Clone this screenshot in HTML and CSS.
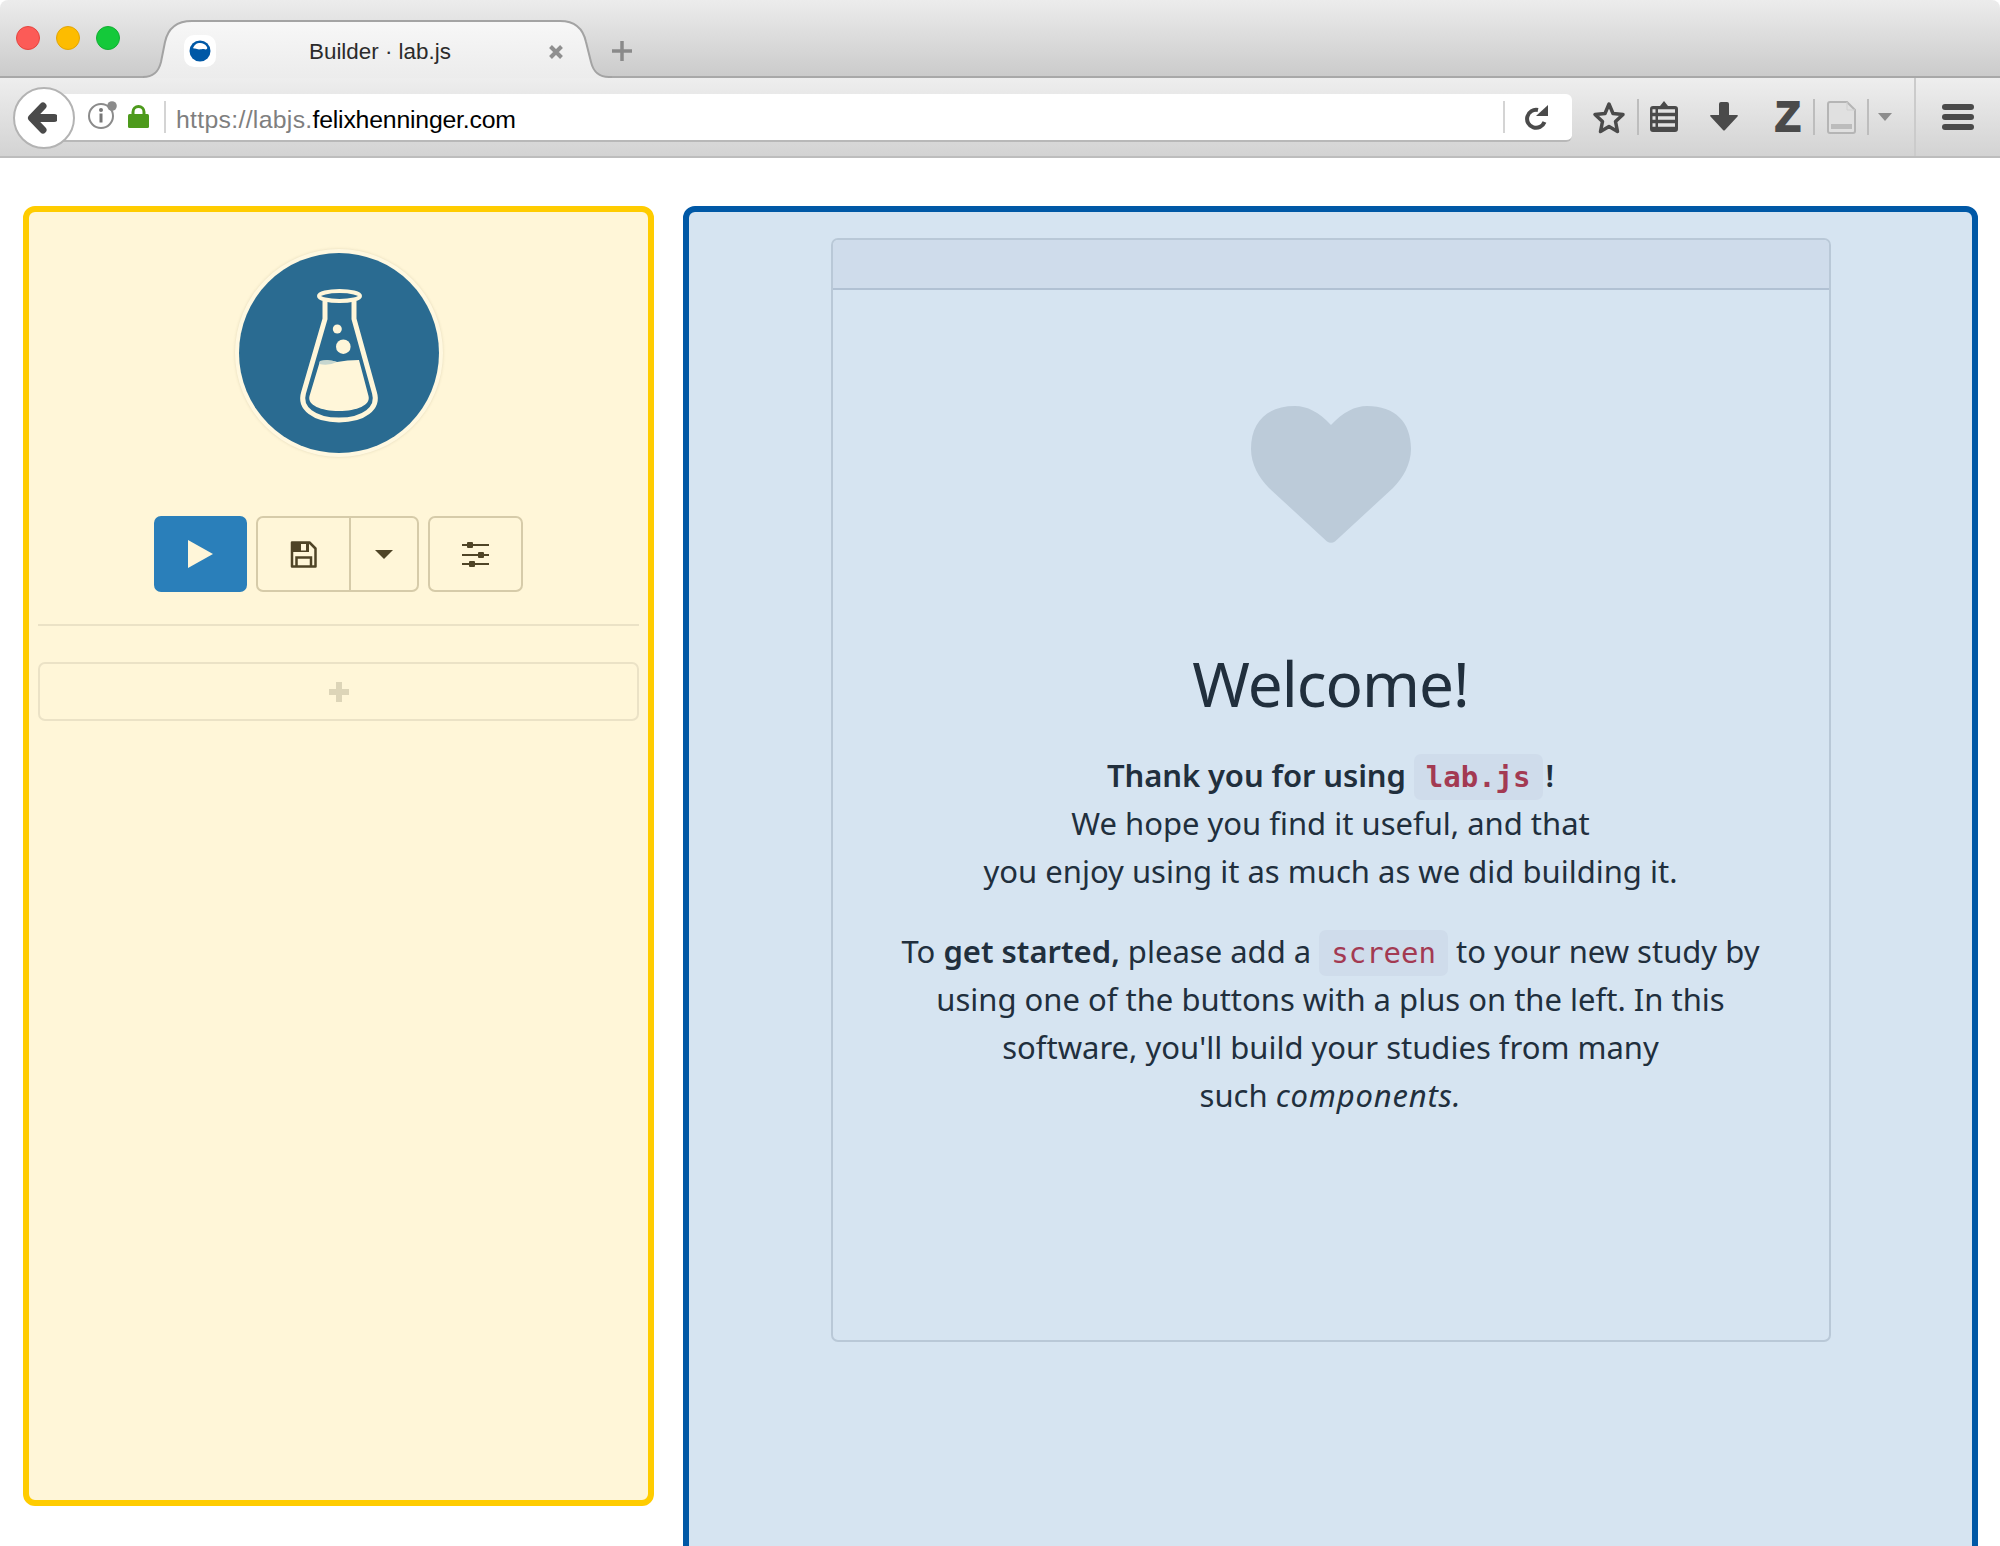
FILE: index.html
```html
<!DOCTYPE html>
<html lang="en">
<head>
<meta charset="utf-8">
<title>Builder · lab.js</title>
<link rel="stylesheet" href="styles.css">
</head>
<body>
<header class="browser">
  <div class="tabstrip">
    <div class="lights">
      <span class="light light-red"></span>
      <span class="light light-yellow"></span>
      <span class="light light-green"></span>
    </div>
    <div class="tab">
      <svg class="tab-shape" width="469" height="58" viewBox="0 0 469 58">
        <defs><linearGradient id="tabfill" x1="0" y1="0" x2="0" y2="1"><stop offset="0" stop-color="#f7f7f7"/><stop offset="1" stop-color="#ececec"/></linearGradient></defs>
        <path fill="url(#tabfill)" d="M0 58V57C12 57 16 50 18 42L22 22C25 8 34 1 49 1H417C432 1 440 8 443 22L448 42C450 50 454 57 466 57H469V58Z"/>
        <path fill="none" stroke="#a3a3a3" stroke-width="2" d="M0 57C12 57 16 50 18 42L22 22C25 8 34 1 49 1H417C432 1 440 8 443 22L448 42C450 50 454 57 466 57H469"/>
      </svg>
      <span class="favicon">
        <svg width="24" height="24" viewBox="0 0 24 24"><circle cx="12" cy="12" r="10.500" fill="#0058a6"/><path fill="#fff" d="M5 9C7 5 9 4 12 4S17 5 19 8C20 10 18 11 16 10C13 10 11 11 9 10C8 9.500 6 10 5 9Z"/></svg>
      </span>
      <span class="tab-title">Builder · lab.js</span>
      <svg class="tab-close" width="16" height="16" viewBox="0 0 16 16"><path d="M2.500 2.500L13.500 13.500M13.500 2.500L2.500 13.500" stroke="#8f8f8f" stroke-width="4"/></svg>
    </div>
    <svg class="newtab" width="20" height="20" viewBox="0 0 20 20"><path d="M10 0V20M0 10H20" stroke="#8a8a8a" stroke-width="3.500"/></svg>
  </div>
  <nav class="navbar">
    <button class="back" type="button">
      <svg width="30" height="32" viewBox="0 0 30 32"><path d="M16 4L4.500 16L16 28" fill="none" stroke="#4a4a4a" stroke-width="7" stroke-linecap="round" stroke-linejoin="round"/><path d="M7 16H27" stroke="#4a4a4a" stroke-width="8" stroke-linecap="round"/></svg>
    </button>
    <div class="urlbar">
      <svg class="info" width="29" height="28" viewBox="0 0 29 28"><circle cx="13" cy="15" r="12" fill="none" stroke="#8b8b8b" stroke-width="2"/><circle cx="13" cy="9" r="2" fill="#777"/><rect x="11.500" y="12.500" width="3" height="9" fill="#777"/><circle cx="24" cy="5" r="4.800" fill="#8b8b8b"/></svg>
      <svg class="lock" width="21" height="23" viewBox="0 0 21 23"><path d="M5 10V7A5.500 5.500 0 0 1 16 7V10" fill="none" stroke="#4d9a1c" stroke-width="3"/><rect y="9" width="21" height="14" rx="1.500" fill="#4d9a1c"/></svg>
      <span class="url-divider"></span>
      <span class="url"><span class="url-dim">https://labjs.</span><span class="url-host">felixhenninger.com</span></span>
      <span class="url-divider url-divider-end"></span>
      <svg class="reload" width="24" height="26" viewBox="0 0 24 26"><path d="M19.500 18A9 9 0 1 1 13 6" fill="none" stroke="#4a4a4a" stroke-width="4"/><path d="M23 1V12H11Z" fill="#4a4a4a"/></svg>
    </div>
    <div class="tools">
      <svg class="tool-star" width="34" height="33" viewBox="0 0 34 33"><path d="M17 3L21 12.500L31 13.500L23.500 20.500L25.500 30.500L17 25.500L8.500 30.500L10.500 20.500L3 13.500L13 12.500Z" fill="none" stroke="#4a4a4a" stroke-width="3.500" stroke-linejoin="round"/></svg>
      <span class="tool-sep tool-sep-a"></span>
      <svg class="tool-list" width="28" height="31" viewBox="0 0 28 31"><path d="M3 5H10L14 0L18 5H25Q28 5 28 8V28Q28 31 25 31H3Q0 31 0 28V8Q0 5 3 5Z" fill="#4a4a4a"/><path d="M2.500 10H5.500M2.500 17H5.500M2.500 24H5.500M8 10H25M8 17H25M8 24H25" stroke="#e2e2e2" stroke-width="3.500"/></svg>
      <svg class="tool-down" width="28" height="29" viewBox="0 0 28 29"><path d="M9 2Q9 0 11 0H17Q19 0 19 2V13H27Q28.500 13 27.500 14.500L15 28Q14 29 13 28L0.500 14.500Q-0.500 13 1 13H9Z" fill="#4a4a4a"/></svg>
      <span class="tool-z">Z</span>
      <span class="tool-sep tool-sep-b"></span>
      <svg class="tool-doc" width="29" height="33" viewBox="0 0 29 33"><path d="M3 1H20L28 9V30Q28 32 26 32H3Q1 32 1 30V3Q1 1 3 1Z" fill="#e0e0e0" stroke="#b5b5b5" stroke-width="2"/><path d="M20 1V9H28" fill="none" stroke="#d0d0d0"/><rect x="4" y="23" width="21" height="5" fill="#bcbcbc"/></svg>
      <span class="tool-sep tool-sep-c"></span>
      <svg class="tool-tri" width="14" height="8" viewBox="0 0 14 8"><path d="M0 0H14L7 8Z" fill="#8d8d8d"/></svg>
      <span class="tool-divider"></span>
      <div class="burger"><span></span><span></span><span></span></div>
    </div>
  </nav>
</header>

<main class="workspace">
  <aside class="sidebar">
    <div class="logo">
      <svg width="200" height="200" viewBox="0 0 200 200">
        <circle cx="100" cy="100" r="100" fill="#2a6b91"/>
        <ellipse cx="100.500" cy="43" rx="20.500" ry="5" fill="none" stroke="#fff6d9" stroke-width="4"/>
        <path d="M86 48V66L64.500 140C60 155 75 167 100 167S140 155 135.500 140L115 66V48" fill="none" stroke="#fff6d9" stroke-width="5"/>
        <path d="M81 108Q90 106 98 109Q108 107 120 107L129.500 143C132 152 118 158 100 158S68 152 70.500 143Z" fill="#fff6d9"/>
        <path d="M81 108Q90 106 98 109Q90 113 80 111Z" fill="#c6d6cf"/>
        <circle cx="98.300" cy="76" r="4.500" fill="#fff6d9"/>
        <circle cx="104.300" cy="93.700" r="7.300" fill="#fff6d9"/>
      </svg>
    </div>
    <div class="actions">
      <button class="btn btn-run" type="button"><svg width="25" height="28" viewBox="0 0 25 28"><path d="M0 0L25 14L0 28Z" fill="#fff6d9"/></svg></button>
      <div class="btn-group">
        <button class="btn btn-save" type="button"><svg width="27" height="27" viewBox="0 0 27 27"><path d="M2 1.500H19.500L25.500 7.500V25.500H2Z" fill="none" stroke="#4f4426" stroke-width="2.500" stroke-linejoin="round"/><path d="M3 2H19V11H3Z" fill="#4f4426"/><rect x="11" y="3" width="5" height="6.500" fill="#fff6d9"/><path d="M6.500 25V16.500H21V25" fill="none" stroke="#4f4426" stroke-width="2.500"/></svg></button>
        <button class="btn btn-caret" type="button"><svg width="18" height="9" viewBox="0 0 18 9"><path d="M0 0H18L9 9Z" fill="#4f4426"/></svg></button>
      </div>
      <button class="btn btn-options" type="button"><svg width="27" height="25" viewBox="0 0 27 25"><path d="M0 3H27M0 13H27M0 22H27" stroke="#4f4426" stroke-width="2"/><rect x="5" y="0" width="6" height="6" rx="1" fill="#4f4426"/><rect x="16" y="10" width="6" height="6" rx="1" fill="#4f4426"/><rect x="7" y="19" width="6" height="6" rx="1" fill="#4f4426"/></svg></button>
    </div>
    <hr class="rule">
    <div class="add-box"><svg width="20" height="20" viewBox="0 0 20 20"><path d="M10 0V20M0 10H20" stroke="#ddd5b8" stroke-width="6"/></svg></div>
  </aside>

  <section class="stage">
    <div class="screen">
      <div class="screen-head"></div>
      <div class="screen-body">
        <svg class="heart" width="160" height="138" viewBox="0 0 160 138"><path d="M80 19C68 6 56 0 44 0C16 0 0 16 0 43C0 58 8 72 18 82L76 135.500Q80 138 84 135.500L142 82C152 72 160 58 160 43C160 16 144 0 116 0C104 0 92 6 80 19Z" fill="#bccbd9"/></svg>
        <h1 class="welcome">Welcome!</h1>
        <p class="copy"><strong class="lead">Thank you for using <code class="chip">lab.js</code><span class="bang">!</span></strong><br>We hope you find it useful, and that<br>you enjoy using it as much as we did building it.</p>
        <p class="copy">To <strong>get started,</strong> please add a <code class="chip">screen</code> to your new study by<br>using one of the buttons with a plus on the left. In this<br>software, you'll build your studies from many<br>such <em>components.</em></p>
      </div>
    </div>
  </section>
</main>
</body>
</html>
```

FILE: styles.css
```css
* { box-sizing: border-box; }

html, body {
  margin: 0;
  height: 100%;
  overflow: hidden;
  background: #fff;
}

body { font-family: "Liberation Sans", Arial, sans-serif; }

/* Browser chrome */
.tabstrip {
  display: flex;
  align-items: flex-end;
  height: 78px;
  border-bottom: 2px solid #a8a8a8;
  background: linear-gradient(#ececec, #cbcbcb);
  border-radius: 8px 8px 0 0;
}

.lights {
  display: flex;
  gap: 16px;
  align-self: flex-start;
  margin: 26px 0 0 16px;
}

.light {
  width: 24px;
  height: 24px;
  border-radius: 50%;
}
.light-red { background: #fc5b57; border: 1px solid #e5453f; }
.light-yellow { background: #fdbc00; border: 1px solid #e2a506; }
.light-green { background: #14c93a; border: 1px solid #12ae33; }

.tab {
  position: relative;
  display: flex;
  align-items: center;
  width: 469px;
  height: 58px;
  margin: 0 0 -2px 23px;
  padding: 5px 48px 0 41px;
}

.tab-shape { position: absolute; left: 0; top: 0; }

.favicon {
  position: relative;
  display: flex;
  align-items: center;
  justify-content: center;
  width: 32px;
  height: 32px;
  margin-top: -1px;
  background: #fff;
  border-radius: 10px;
}

.tab-title {
  position: relative;
  flex: 1;
  margin-left: 93px;
  font-size: 22.400px;
  color: #2b2b2b;
}

.tab-close { position: relative; }

.newtab {
  margin: 0 0 15px 0;
}

.navbar {
  display: flex;
  align-items: center;
  height: 80px;
  padding-top: 2px;
  border-bottom: 2px solid #bdbdbd;
  background: linear-gradient(#eeeeee, #d3d3d3);
}

.back {
  position: relative;
  z-index: 1;
  display: flex;
  align-items: center;
  justify-content: center;
  flex: none;
  width: 62px;
  height: 62px;
  margin-left: 13px;
  padding: 0 4px 0 0;
  background: #fff;
  border: 2px solid #b3b3b3;
  border-radius: 50%;
}

.urlbar {
  display: flex;
  align-items: center;
  flex: none;
  width: 1528px;
  height: 48px;
  margin-left: -31px;
  padding: 0 23px 0 44px;
  background: #fff;
  border-bottom: 2px solid #b8b8b8;
  border-radius: 0 6px 6px 0;
}

.info { margin-top: -4px; }
.lock { margin: -2px 0 0 11px; }

.url-divider {
  width: 2px;
  height: 32px;
  margin-left: 15px;
  background: #d4d4d4;
}

.url {
  flex: 1;
  margin: 5px 0 0 10px;
  font-size: 24.800px;
  color: #000;
}
.url-dim { color: #7f7f7f; letter-spacing: .3px; }
.url-host { letter-spacing: -.2px; }

.url-divider-end { margin-left: 0; }

.reload { margin-left: 20px; }

.tools {
  display: flex;
  align-items: center;
  flex: 1;
  align-self: stretch;
  margin-top: -2px;
}

.tool-star { margin-left: 20px; }
.tool-list { margin-left: 11px; margin-top: -2px; }
.tool-down { margin-left: 32px; margin-top: -2px; }

.tool-z {
  width: 24px;
  margin-left: 37px;
  font-size: 42px;
  line-height: 1;
  font-weight: 700;
  color: #4a4a4a;
  -webkit-text-stroke: 2px #4a4a4a;
}

.tool-sep {
  width: 2px;
  height: 36px;
  background: #bdbdbd;
}
.tool-sep-a { margin-left: 11px; }
.tool-sep-b { margin-left: 14px; }
.tool-sep-c { margin-left: 11px; }

.tool-doc { margin-left: 12px; }
.tool-tri { margin: 0 0 0 9px; }

.tool-divider {
  align-self: stretch;
  width: 2px;
  margin-left: 22px;
  background: #cbcbcb;
}

.burger {
  display: flex;
  flex-direction: column;
  gap: 4px;
  width: 32px;
  margin-left: 26px;
}
.burger span {
  height: 6px;
  border-radius: 3px;
  background: #4a4a4a;
}

/* Workspace */
.workspace {
  display: flex;
  gap: 29px;
  align-items: flex-start;
  padding: 48px 22px 0 23px;
}

.sidebar {
  display: flex;
  flex-direction: column;
  align-items: center;
  flex: none;
  width: 631px;
  height: 1300px;
  padding: 37px 9px 0;
  background: #fff6d8;
  border: 6px solid #ffcc00;
  border-radius: 12px;
}

.logo {
  display: flex;
  align-items: center;
  justify-content: center;
  width: 208px;
  height: 208px;
  background: #fff8e0;
  border-radius: 50%;
  box-shadow: 0 0 3px rgba(120, 110, 70, .2);
}

.actions {
  display: flex;
  gap: 10px;
  margin-top: 59px;
}

.btn {
  display: flex;
  align-items: center;
  justify-content: center;
  height: 76px;
  padding: 0;
  background: transparent;
  border: 2px solid #d6cba9;
  border-radius: 7px;
}

.btn-run {
  width: 93px;
  background: #2a7fba;
  border-color: #2a7fba;
}

.btn-group {
  display: flex;
  margin: 0 -1px;
}

.btn-save {
  width: 95px;
  padding-right: 1px;
  border-radius: 7px 0 0 7px;
}

.btn-caret {
  width: 68px;
  border-left: 0;
  border-radius: 0 7px 7px 0;
}

.btn-options { width: 95px; }

.rule {
  align-self: stretch;
  height: 2px;
  margin: 32px 0 0;
  background: #ebe2c6;
  border: 0;
}

.add-box {
  display: flex;
  align-items: center;
  justify-content: center;
  align-self: stretch;
  height: 59px;
  margin-top: 36px;
  border: 2px solid #ebe2c6;
  border-radius: 7px;
}

.stage {
  display: flex;
  flex-direction: column;
  align-items: center;
  flex: 1;
  height: 1500px;
  padding-top: 26px;
  background: #d6e4f1;
  border: 6px solid #0058a6;
  border-radius: 12px;
}

.screen {
  width: 1000px;
  height: 1104px;
  border: 2px solid #b9c8d7;
  border-radius: 7px;
}

.screen-head {
  height: 50px;
  background: #cfdceb;
  border-bottom: 2px solid #b1c1d3;
  border-radius: 5px 5px 0 0;
}

.screen-body {
  display: flex;
  flex-direction: column;
  align-items: center;
  padding-top: 116px;
  color: #212f3d;
  font-family: "Noto Sans", "Open Sans", sans-serif;
}

.heart { flex: none; }

.welcome {
  margin: 101px 0 30px;
  font-size: 62px;
  line-height: 76px;
  font-weight: 400;
  letter-spacing: -1px;
}

.copy {
  margin: 0 0 32px;
  font-size: 31px;
  line-height: 48px;
  text-align: center;
}

.copy strong { font-weight: 600; }
.copy .lead { letter-spacing: -.1px; }
.copy em { letter-spacing: .8px; }

.bang { margin-left: 3px; }

.chip {
  padding: 6px 12px;
  background: #cfdceb;
  border-radius: 7px;
  font-family: "DejaVu Sans Mono", "Liberation Mono", monospace;
  font-size: 29px;
  line-height: 1;
  letter-spacing: 0;
  color: #a33a52;
}
```
